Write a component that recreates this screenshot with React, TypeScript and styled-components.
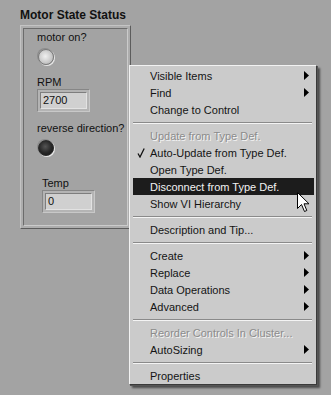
import React from 'react'
import styled, { createGlobalStyle } from 'styled-components'

const GlobalStyle = createGlobalStyle`
  html, body {
    margin: 0;
    padding: 0;
    width: 331px;
    height: 395px;
    overflow: hidden;
    background: #a3a3a3;
    font-family: "Liberation Sans", Arial, sans-serif;
  }
`

type Item = { label: string; sub?: boolean; disabled?: boolean; checked?: boolean; active?: boolean }

// null = separator
const menuItems: (Item | null)[] = [
  { label: 'Visible Items', sub: true },
  { label: 'Find', sub: true },
  { label: 'Change to Control' },
  null,
  { label: 'Update from Type Def.', disabled: true },
  { label: 'Auto-Update from Type Def.', checked: true },
  { label: 'Open Type Def.' },
  { label: 'Disconnect from Type Def.', active: true },
  { label: 'Show VI Hierarchy' },
  null,
  { label: 'Description and Tip...' },
  null,
  { label: 'Create', sub: true },
  { label: 'Replace', sub: true },
  { label: 'Data Operations', sub: true },
  { label: 'Advanced', sub: true },
  null,
  { label: 'Reorder Controls In Cluster...', disabled: true },
  { label: 'AutoSizing', sub: true },
  null,
  { label: 'Properties' },
]

const App = () => {
  return (
    <Stage>
      <GlobalStyle />
      <Title>Motor State Status</Title>
      <Frame>
        <Inner>
          <Control $top={2}>
            <Label>motor on?</Label>
            <Led $on />
          </Control>
          <Control $top={11}>
            <Label>RPM</Label>
            <NumBox>
              <Field>2700</Field>
            </NumBox>
          </Control>
          <Control $top={10}>
            <Label>reverse direction?</Label>
            <Led />
          </Control>
          <Control $top={21} $left={5}>
            <Label>Temp</Label>
            <NumBox>
              <Field>0</Field>
            </NumBox>
          </Control>
        </Inner>
      </Frame>

      <Menu>
        {menuItems.map((it, i) =>
          it === null ? (
            <Separator key={i} />
          ) : (
            <MenuItem key={i} $active={it.active} $disabled={it.disabled}>
              {it.checked && (
                <Check viewBox="0 0 8 10" width="8" height="10">
                  <path d="M1 5.5 L3 9 L7.2 0.5" fill="none" stroke="#111" strokeWidth="1.3" />
                </Check>
              )}
              <span>{it.label}</span>
              {it.sub && (
                <svg width="5" height="9" viewBox="0 0 5 9">
                  <polygon points="0,0 5,4.5 0,9" fill="#000" />
                </svg>
              )}
            </MenuItem>
          )
        )}
        <Cursor viewBox="0 0 13 20" width="13" height="20">
          <path
            d="M0.5 0.5 L0.5 16.5 L4.5 12.5 L7.5 19.5 L9.8 18.5 L7 11.8 L12 11.8 Z"
            fill="#fff"
            stroke="#000"
            strokeWidth="1"
            strokeLinejoin="miter"
          />
        </Cursor>
      </Menu>
    </Stage>
  )
}

export default App

const Stage = styled.div`
  position: relative;
  width: 331px;
  height: 395px;
  box-sizing: border-box;
  padding: 8px 0 0 20px;
`
const Title = styled.div`
  font-weight: bold;
  font-size: 12px;
  line-height: 14px;
  color: #111;
`
const Frame = styled.div`
  margin-top: 3px;
  width: 111px;
  height: 204px;
  box-sizing: border-box;
  border: 1px solid;
  border-color: #c4c4c4 #5c5c5c #5c5c5c #c4c4c4;
  background: #adadad;
  padding: 2px;
`
const Inner = styled.div`
  height: 100%;
  box-sizing: border-box;
  border: 1px solid;
  border-color: #6c6c6c #cbcbcb #cbcbcb #6c6c6c;
  background: #a3a3a3;
  padding: 0 0 0 13px;
  display: flex;
  flex-direction: column;
  align-items: flex-start;
`
const Control = styled.div<{ $top: number; $left?: number }>`
  display: flex;
  flex-direction: column;
  align-items: flex-start;
  margin-top: ${p => p.$top}px;
  margin-left: ${p => p.$left || 0}px;
`
const Label = styled.div`
  font-size: 11px;
  line-height: 13px;
  color: #111;
  white-space: nowrap;
`
const Led = styled.div<{ $on?: boolean }>`
  margin: 5px 0 0 1px;
  width: 16px;
  height: 16px;
  border-radius: 50%;
  box-sizing: border-box;
  border: 1px solid ${p => (p.$on ? '#7a7a7a' : '#2a2a2a')};
  background: ${p =>
    p.$on
      ? 'radial-gradient(circle at 45% 45%, #efefef 0%, #d2d2d2 45%, #a8a8a8 100%)'
      : 'radial-gradient(circle at 45% 40%, #555 0%, #262626 55%, #111 100%)'};
  box-shadow: 1px 1px 0 #e6e6e6, -1px -1px 0 #8c8c8c;
`
const NumBox = styled.div`
  width: 53px;
  height: 23px;
  box-sizing: border-box;
  border: 1px solid;
  border-color: #868686 #c8c8c8 #c8c8c8 #868686;
  background: #b4b4b4;
  padding: 2px;
`
const Field = styled.div`
  height: 100%;
  box-sizing: border-box;
  border: 1px solid;
  border-color: #7e7e7e #e2e2e2 #e2e2e2 #7e7e7e;
  background: #d0d0d0;
  font-size: 11px;
  line-height: 15px;
  color: #111;
  padding-left: 2px;
`
const Menu = styled.div`
  position: absolute;
  left: 129px;
  top: 65px;
  width: 188px;
  box-sizing: border-box;
  background: #cbcbcb;
  border: 1px solid;
  border-color: #f2f2f2 #3a3a3a #3a3a3a #f2f2f2;
  padding: 1px 0 0;
  box-shadow: 1px 1px 0 #555, 3px 3px 2px rgba(0, 0, 0, 0.55);
`
const MenuItem = styled.div<{ $active?: boolean; $disabled?: boolean }>`
  position: relative;
  display: flex;
  align-items: center;
  justify-content: space-between;
  height: 17px;
  margin: 0 2px 0 3px;
  padding: 0 5px 0 17px;
  font-size: 11px;
  white-space: nowrap;
  background: ${p => (p.$active ? '#1c1c1c' : 'transparent')};
  color: ${p => (p.$active ? '#f2f2f2' : p.$disabled ? '#8c8c8c' : '#141414')};
  text-shadow: ${p => (p.$disabled ? '1px 1px 0 #f4f4f4' : 'none')};
`
const Check = styled.svg`
  position: absolute;
  left: 4px;
  top: 4px;
`
const Separator = styled.div`
  height: 0;
  margin: 4px 4px 3px 3px;
  border-top: 1px solid #8a8a8a;
  border-bottom: 1px solid #f4f4f4;
`
const Cursor = styled.svg`
  position: absolute;
  left: 167px;
  top: 126px;
`
